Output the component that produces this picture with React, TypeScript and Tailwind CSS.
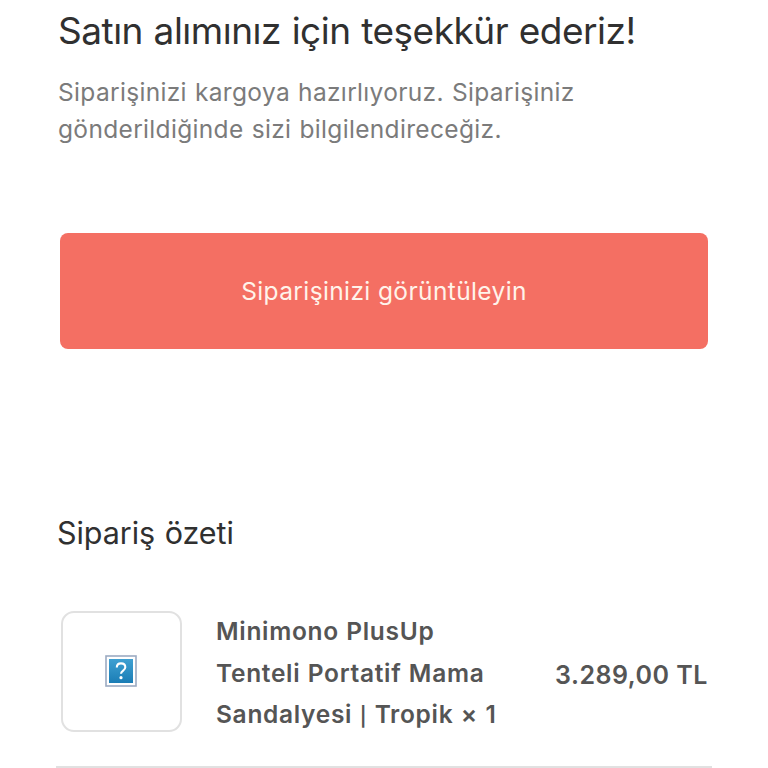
function MissingImage() {
  return (
    <svg className="h-8 w-8" viewBox="0 0 32 32" role="img" aria-label="Missing image">
      <defs>
        <linearGradient id="tile" x1="0" y1="0" x2="0" y2="1">
          <stop offset="0" stopColor="#3fa0d2" />
          <stop offset="1" stopColor="#1b7db5" />
        </linearGradient>
      </defs>
      <rect x="1" y="1" width="30" height="30" fill="#fff" stroke="#9cabc2" strokeWidth="1.6" />
      <rect x="4" y="4" width="24" height="24" fill="url(#tile)" />
      <path d="M11.8 12.5C11.8 9.9 13.5 8.4 16 8.4s4.3 1.5 4.3 3.9c0 3.3-4.3 3.2-4.3 6.5" fill="none" stroke="#fff" strokeWidth="2.1" />
      <circle cx="16" cy="22.7" r="1.6" fill="#fff" />
    </svg>
  );
}

export default function App() {
  return (
    <main className="h-[768px] w-[768px] overflow-hidden bg-white pl-[58px] font-['Inter','Liberation_Sans',sans-serif]">
      <h1 className="w-max pt-[6px] text-[37px] leading-[49px] tracking-[-0.49px] [word-spacing:0.7px] text-[#303030]">Satın alımınız için teşekkür ederiz!</h1>
      <p className="mt-[19px] w-max text-[24.5px] leading-[37px] tracking-[0.33px] [word-spacing:0.9px] text-[#7b7b7b]">
        Siparişinizi kargoya hazırlıyoruz. Siparişiniz
        <br />
        gönderildiğinde sizi bilgilendireceğiz.
      </p>
      <button className="mt-[85px] ml-[2px] flex h-[116px] w-[648px] items-center justify-center rounded-[8px] bg-[#f46f63] text-[24.5px] tracking-[0.38px] text-[#fff3ea]">
        Siparişinizi görüntüleyin
      </button>
      <h2 className="mt-[160px] -ml-px w-max text-[30.5px] leading-[48px] tracking-[-0.05px] [word-spacing:1px] text-[#303030]">Sipariş özeti</h2>
      <section className="mt-[53px] flex h-[122px] w-[649px] items-center">
        <div className="ml-[3px] flex h-[121px] w-[121px] items-center justify-center rounded-[13px] border-2 border-[#e1e1e1]">
          <div className="-ml-px">
            <MissingImage />
          </div>
        </div>
        <p className="mt-[5px] ml-[34px] w-max text-[24.5px] leading-[41.5px] font-semibold tracking-[0.69px] [word-spacing:0.6px] text-[#555]">
          Minimono PlusUp
          <br />
          Tenteli Portatif Mama
          <br />
          Sandalyesi <span className="text-[19px] leading-none">|</span> Tropik × 1
        </p>
        <p className="mt-2 -mr-px ml-auto text-[25px] leading-[40px] font-semibold tracking-[0.5px] whitespace-nowrap text-[#555]">3.289,00 TL</p>
      </section>
      <hr className="mt-[34px] -ml-[2px] w-[656px] border-t-2 border-[#e1e1e1]" />
    </main>
  );
}
